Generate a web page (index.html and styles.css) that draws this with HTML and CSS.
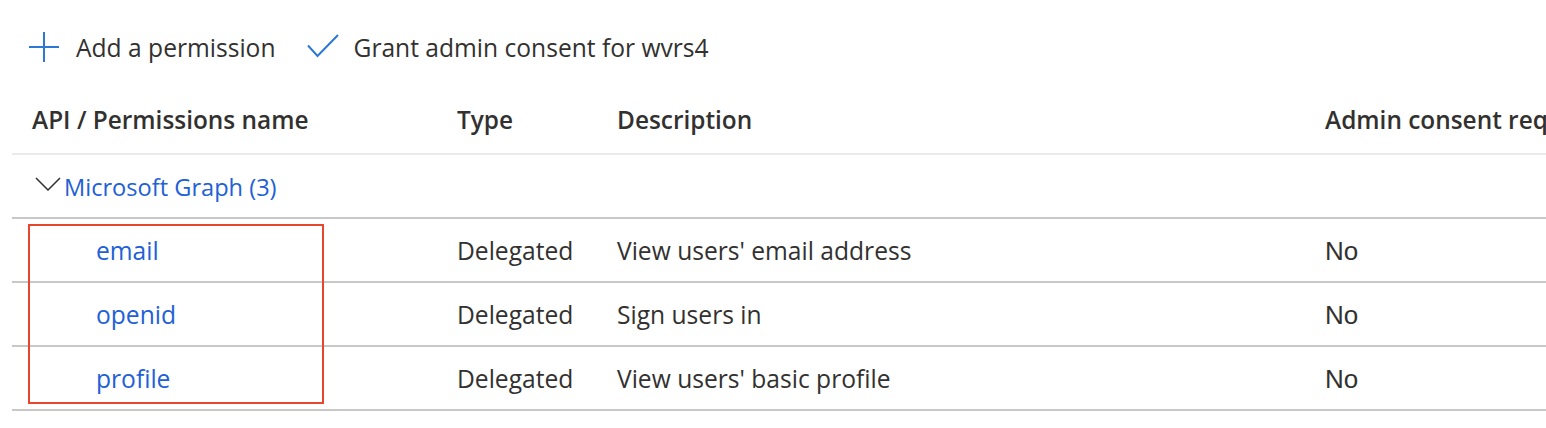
FILE: index.html
```html
<!DOCTYPE html>
<html lang="en">
<head>
<meta charset="utf-8">
<title>API permissions</title>
<link rel="stylesheet" href="styles.css">
</head>
<body>
<div class="page">
  <div class="toolbar">
    <button class="tool">
      <svg class="ico-plus" width="30" height="30" viewBox="0 0 30 30"><path d="M15 0V30M0 15H30" stroke="#2b78d5" stroke-width="2" fill="none"/></svg>
      <span>Add a permission</span>
    </button>
    <button class="tool">
      <svg class="ico-check" width="32" height="24" viewBox="0 0 32 24"><path d="M1 11.5L10.5 22L31 1" stroke="#2b78d5" stroke-width="2" fill="none"/></svg>
      <span>Grant admin consent for wvrs4</span>
    </button>
  </div>

  <div class="table">
    <div class="row head">
      <div class="cell c1">API / Permissions name</div>
      <div class="cell">Type</div>
      <div class="cell">Description</div>
      <div class="cell">Admin consent required</div>
    </div>
    <div class="row group">
      <div class="cell c1 grp">
        <svg class="chev" width="26" height="14" viewBox="0 0 26 14"><path d="M1 1L13 13L25 1" stroke="#323130" stroke-width="1.5" fill="none"/></svg>
        <span class="link grp-name">Microsoft Graph (3)</span>
      </div>
    </div>
    <div class="rows">
      <div class="row item">
        <div class="cell c1 perm"><span class="link">email</span></div>
        <div class="cell">Delegated</div>
        <div class="cell">View users' email address</div>
        <div class="cell no">No</div>
      </div>
      <div class="row item">
        <div class="cell c1 perm"><span class="link">openid</span></div>
        <div class="cell">Delegated</div>
        <div class="cell">Sign users in</div>
        <div class="cell no">No</div>
      </div>
      <div class="row item">
        <div class="cell c1 perm"><span class="link">profile</span></div>
        <div class="cell">Delegated</div>
        <div class="cell">View users' basic profile</div>
        <div class="cell no">No</div>
      </div>
      <div class="highlight"></div>
    </div>
  </div>
</div>
</body>
</html>
```

FILE: styles.css
```css
html, body {
  margin: 0;
  padding: 0;
  background: #ffffff;
  overflow: hidden;
}
body {
  width: 1546px;
  height: 428px;
  font-family: "Open Sans", "Noto Sans", sans-serif;
  font-size: 24.6px;
  color: #323130;
}
.page {
  padding-left: 12px;
}
.toolbar {
  height: 94px;
  display: flex;
  align-items: center;
  padding-left: 17px;
  padding-top: 2px;
  box-sizing: border-box;
  gap: 31px;
}
.tool {
  display: flex;
  align-items: center;
  gap: 17px;
  border: 0;
  background: none;
  padding: 0;
  font: inherit;
  color: #323130;
  line-height: 32px;
}
.tool + .tool {
  gap: 15px;
}
.ico-plus {
  margin-top: -2px;
}
.ico-check {
  margin-top: -5px;
}
.table {
  width: 1700px;
}
.row {
  display: grid;
  grid-template-columns: 445px 160px 708px 1fr;
  line-height: 32px;
  white-space: nowrap;
}
.cell.c1 {
  padding-left: 20px;
}
.head {
  padding: 10px 0 17px;
  font-weight: 600;
  font-size: 24.4px;
  border-bottom: 2px solid #ebebeb;
}
.group {
  display: flex;
  height: 64px;
  box-sizing: border-box;
  padding-top: 2px;
  align-items: center;
  border-bottom: 2px solid #c8c8c8;
}
.grp {
  display: flex;
  align-items: center;
  padding-left: 23px !important;
  gap: 3px;
}
.grp-name {
  font-size: 23.6px;
}
.chev {
  margin-top: -6px;
}
.link {
  color: #2160d6;
}
.rows {
  position: relative;
}
.item {
  height: 60px;
  padding-top: 2px;
  align-items: center;
  border-bottom: 2px solid #c8c8c8;
}
.perm {
  padding-left: 84px !important;
}
.no {
  font-family: "Liberation Sans", Arial, sans-serif;
  font-size: 26px;
}
.highlight {
  position: absolute;
  left: 16px;
  top: 5px;
  width: 292px;
  height: 176px;
  border: 2px solid #e8452f;
  pointer-events: none;
}
```
